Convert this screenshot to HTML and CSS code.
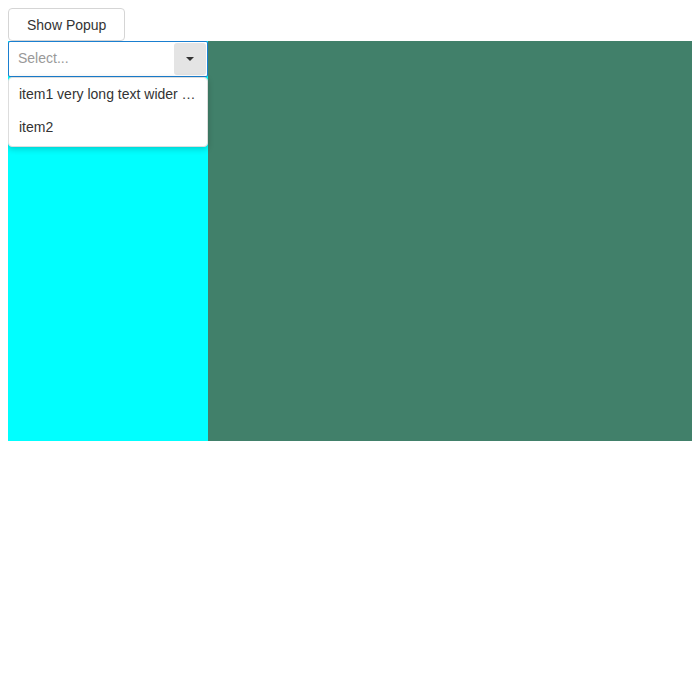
FILE: index.html
```html
<!DOCTYPE html>
<html>
<head>
<meta charset="utf-8">
<link rel="stylesheet" href="styles.css">
</head>
<body>
<button class="show-btn">Show Popup</button>
<div class="row">
  <div class="side">
    <div class="combo">
      <span class="placeholder">Select...</span>
      <span class="arrow-btn"><span class="caret"></span></span>
    </div>
    <div class="popup">
      <div class="item">item1 very long text wider …</div>
      <div class="item">item2</div>
    </div>
  </div>
  <div class="main"></div>
</div>
</body>
</html>
```
FILE: styles.css
```css
body {
  margin: 8px;
  font-family: "Liberation Sans", Arial, sans-serif;
  font-size: 14px;
  color: #333;
}
.show-btn {
  display: block;
  font-family: inherit;
  font-size: 14px;
  color: #333;
  background: #fff;
  border: 1px solid #d5d5d5;
  border-radius: 4px;
  height: 33px;
  padding: 0 18px;
  margin: 0;
}
.row {
  display: flex;
  height: 400px;
}
.side {
  width: 200px;
  background: #00ffff;
  position: relative;
}
.main {
  flex: 1;
  background: #41806a;
}
.combo {
  box-sizing: border-box;
  height: 36px;
  background: #fff;
  border: 1px solid #1a7fd0;
  border-radius: 2px;
  display: flex;
  align-items: center;
  padding: 1px;
  padding-left: 9px;
}
.placeholder {
  flex: 1;
  color: #999;
  margin-top: -2px;
}
.arrow-btn {
  width: 32px;
  height: 32px;
  background: #e4e4e4;
  border-radius: 3px;
  display: flex;
  align-items: center;
  justify-content: center;
}
.caret {
  width: 0;
  height: 0;
  border-left: 4px solid transparent;
  border-right: 4px solid transparent;
  border-top: 4px solid #333;
}
.popup {
  position: absolute;
  left: 0;
  top: 36px;
  width: 200px;
  box-sizing: border-box;
  background: #fff;
  border: 1px solid #ddd;
  border-radius: 4px;
  box-shadow: 0 2px 6px rgba(0,0,0,0.2);
  padding: 0 0 2px;
}
.item {
  height: 33px;
  line-height: 33px;
  padding: 0 10px;
  white-space: nowrap;
}
```
